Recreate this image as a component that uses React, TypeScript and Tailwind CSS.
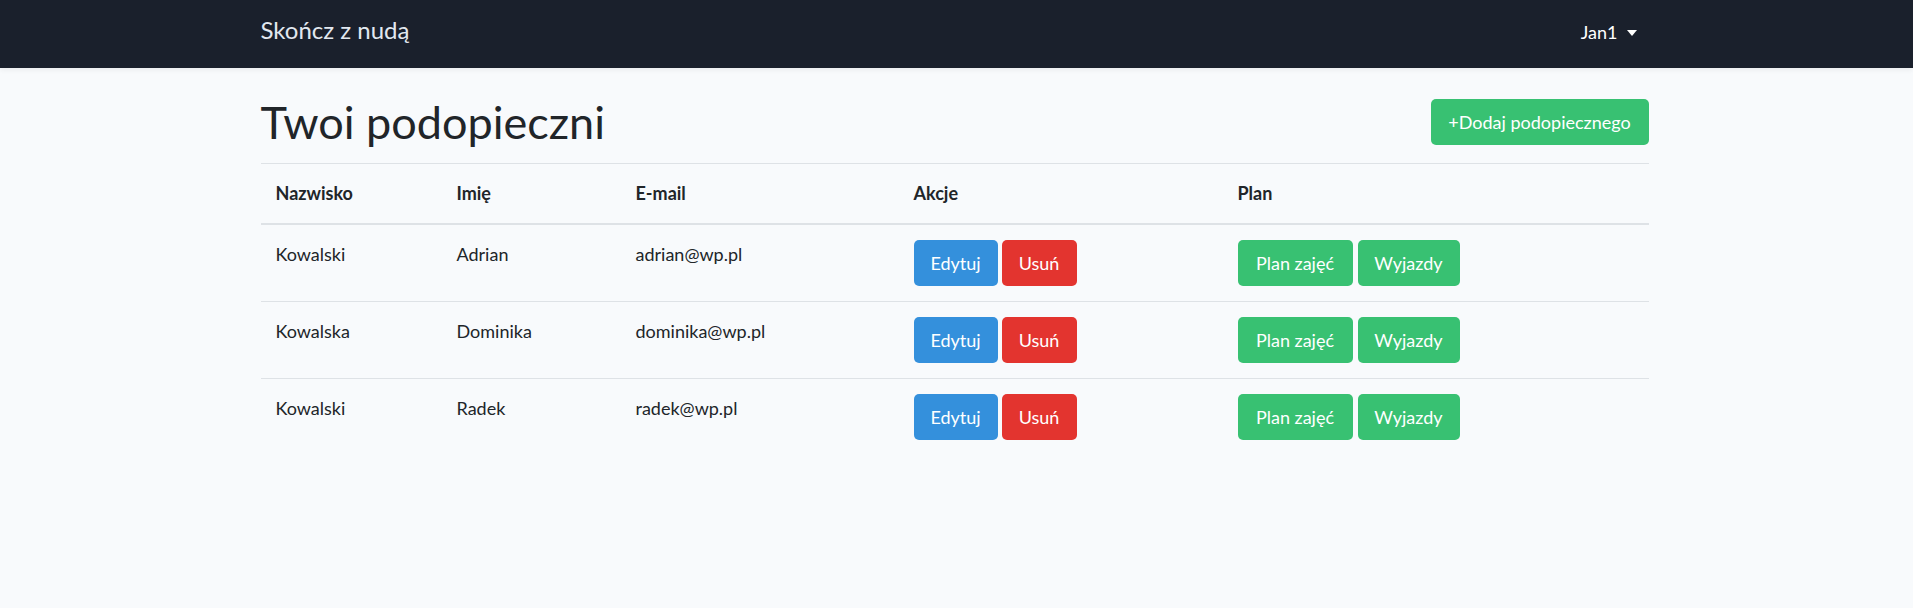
const rows = [
  { surname: 'Kowalski', name: 'Adrian', email: 'adrian@wp.pl' },
  { surname: 'Kowalska', name: 'Dominika', email: 'dominika@wp.pl' },
  { surname: 'Kowalski', name: 'Radek', email: 'radek@wp.pl' },
];

const btn = 'h-[46px] px-[15px] rounded-[5px] text-[18px] leading-[29px] text-white';

const App = () => {
  return (
    <div
      className="min-h-[608px] bg-[#f8fafc] text-[#212529] text-[18px] leading-[29px]"
      style={{ fontFamily: 'Lato, "Noto Sans", sans-serif' }}
    >
      {/* Navbar */}
      <nav className="h-[68px] bg-[#1a202c] shadow-[0_2px_5px_rgba(0,0,0,0.06)]">
        <div className="w-[1392px] pr-[4px] pb-[3px] mx-auto h-full flex items-center justify-between">
          <span className="text-[24px] leading-[32px] pb-[5px] text-[#e2e8f0]">Skończ z nudą</span>
          <button className="flex items-center gap-[9px] pr-[12px] text-white text-[18px]">
            Jan1
            <span className="w-0 h-0 border-l-[5px] border-r-[5px] border-t-[6px] border-l-transparent border-r-transparent border-t-white" />
          </button>
        </div>
      </nav>

      <div className="w-[1392px] pr-[4px] mx-auto">
        {/* Heading */}
        <div className="flex items-center justify-between pt-[31px] pb-[18px] border-b border-[#dee2e6]">
          <h1 className="text-[45px] leading-[46px] font-normal">Twoi podopieczni</h1>
          <button className={`${btn} bg-[#38c172] w-[218px]`}>+Dodaj podopiecznego</button>
        </div>

        {/* Table */}
        <table className="w-full text-left border-collapse">
          <thead>
            <tr className="border-b-2 border-[#dee2e6]">
              <th className="w-[181px] px-[15px] py-[15px] font-bold">Nazwisko</th>
              <th className="w-[179px] px-[15px] py-[15px] font-bold">Imię</th>
              <th className="w-[278px] px-[15px] py-[15px] font-bold">E-mail</th>
              <th className="w-[324px] px-[15px] py-[15px] font-bold">Akcje</th>
              <th className="px-[15px] py-[15px] font-bold">Plan</th>
            </tr>
          </thead>
          <tbody>
            {rows.map((r, i) => (
              <tr key={i} className={i < rows.length - 1 ? 'border-b border-[#dee2e6]' : ''}>
                <td className="px-[15px] py-[15px] align-top">{r.surname}</td>
                <td className="px-[15px] py-[15px] align-top">{r.name}</td>
                <td className="px-[15px] py-[15px] align-top">{r.email}</td>
                <td className="px-[15px] py-[15px] align-top">
                  <div className="flex gap-[4px]">
                    <button className={`${btn} bg-[#3490dc] w-[84px]`}>Edytuj</button>
                    <button className={`${btn} bg-[#e3342f] w-[75px]`}>Usuń</button>
                  </div>
                </td>
                <td className="px-[15px] py-[15px] align-top">
                  <div className="flex gap-[5px]">
                    <button className={`${btn} bg-[#38c172] w-[115px]`}>Plan zajęć</button>
                    <button className={`${btn} bg-[#38c172] w-[102px]`}>Wyjazdy</button>
                  </div>
                </td>
              </tr>
            ))}
          </tbody>
        </table>
      </div>
    </div>
  );
};

export default App;
